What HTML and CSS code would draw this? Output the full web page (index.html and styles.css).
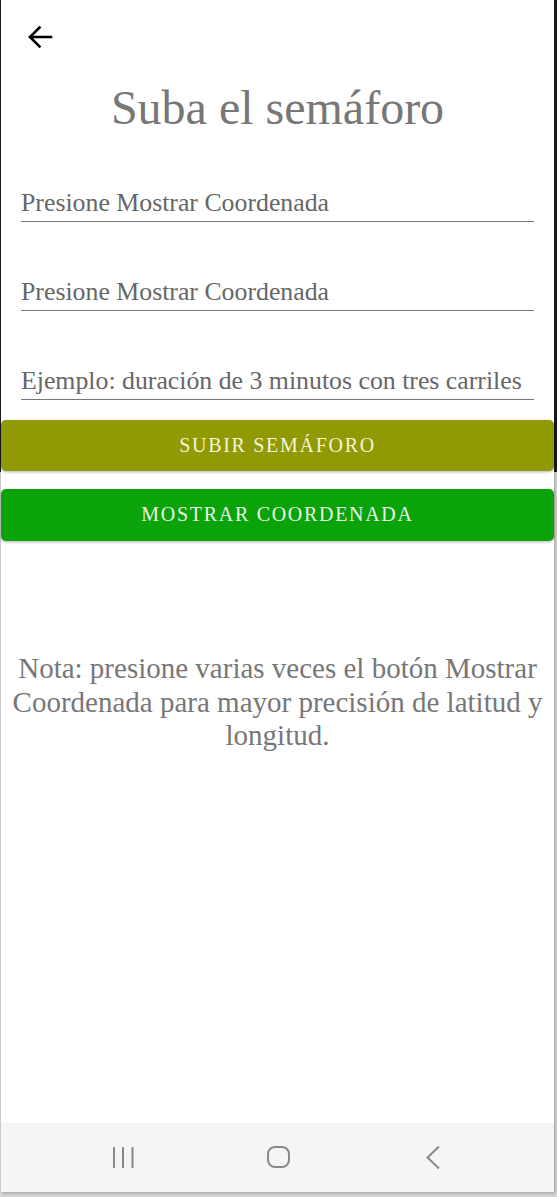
FILE: index.html
```html
<!DOCTYPE html>
<html lang="es">
<head>
<meta charset="utf-8">
<title>Suba el semáforo</title>
<link rel="stylesheet" href="styles.css">
</head>
<body>
<div class="screen">
  <main class="content">
    <div class="topbar">
      <svg class="back" width="26" height="26" viewBox="0 0 26 26" aria-label="Atrás">
        <path d="M24 12H3M12.5 2.5L3 12l9.5 9.5" fill="none" stroke="#000" stroke-width="2.6" stroke-linecap="square"/>
      </svg>
    </div>
    <h1 class="title">Suba el semáforo</h1>
    <div class="fields">
      <div class="field">Presione Mostrar Coordenada</div>
      <div class="field">Presione Mostrar Coordenada</div>
      <div class="field">Ejemplo: duración de 3 minutos con tres carriles</div>
    </div>
    <div class="buttons">
      <button class="btn btn-olive">SUBIR SEMÁFORO</button>
      <button class="btn btn-green">MOSTRAR COORDENADA</button>
    </div>
    <p class="note">Nota: presione varias veces el botón Mostrar Coordenada para mayor precisión de latitud y longitud.</p>
  </main>
  <nav class="navbar">
    <svg width="24" height="24" viewBox="0 0 24 24" aria-label="Recientes">
      <path d="M3 2v21M12 2v21M21.5 2v21" stroke="#8a8a8a" stroke-width="2" fill="none"/>
    </svg>
    <svg width="24" height="24" viewBox="0 0 24 24" aria-label="Inicio">
      <rect x="2" y="2" width="21" height="20" rx="7" ry="7" stroke="#8a8a8a" stroke-width="2" fill="none"/>
    </svg>
    <svg width="24" height="24" viewBox="0 0 24 24" aria-label="Volver">
      <path d="M18 1.5L6.5 12.5L18 23.5" stroke="#8a8a8a" stroke-width="2" fill="none"/>
    </svg>
  </nav>
</div>
</body>
</html>
```

FILE: styles.css
```css
html, body {
  margin: 0;
  padding: 0;
}
body {
  width: 557px;
  height: 1197px;
  overflow: hidden;
  background: linear-gradient(to bottom, #1c1c1c 0, #1c1c1c 472px, #d4d4d4 472px);
  font-family: "Liberation Serif", "Times New Roman", serif;
}
.screen {
  width: 553px;
  height: 1192px;
  margin-left: 1px;
  background: #fff;
  display: flex;
  flex-direction: column;
  box-shadow: 1px 1px 3px rgba(0,0,0,0.25);
}
.content {
  flex: 1;
  display: flex;
  flex-direction: column;
}
.topbar {
  height: 80px;
  box-sizing: border-box;
  padding: 25px 0 0 26px;
}
.back {
  display: block;
}
.title {
  margin: 0;
  font-weight: normal;
  font-size: 48px;
  line-height: 56px;
  color: #777;
  text-align: center;
}
.fields {
  display: flex;
  flex-direction: column;
  gap: 55px;
  margin-top: 51.5px;
  padding: 0 20px 0 20px;
}
.field {
  font-size: 25.8px;
  line-height: 30px;
  color: #666;
  padding-bottom: 3px;
  border-bottom: 1.5px solid #777;
  white-space: nowrap;
}
.buttons {
  display: flex;
  flex-direction: column;
  gap: 18px;
  margin-top: 20px;
}
.btn {
  display: block;
  width: 100%;
  height: 52px;
  border: none;
  border-radius: 5px;
  font-family: "Liberation Serif", "Times New Roman", serif;
  font-size: 20px;
  letter-spacing: 1.7px;
  box-shadow: 0 1px 3px rgba(0,0,0,0.3);
  padding: 0;
}
.btn-olive {
  background: #8f9a04;
  color: #f4f4d6;
  height: 51px;
}
.btn-green {
  background: #0aa30a;
  color: #e8f6e8;
}
.note {
  margin: 111.5px 0 0 0;
  padding: 0 6px;
  font-size: 29px;
  line-height: 33.5px;
  color: #777;
  text-align: center;
}
.navbar {
  height: 69px;
  background: #f5f5f5;
  display: flex;
  justify-content: center;
  align-items: center;
  gap: 131px;
  padding-left: 1px;
  padding-bottom: 2px;
  box-sizing: border-box;
}
.navbar svg {
  display: block;
}
```
